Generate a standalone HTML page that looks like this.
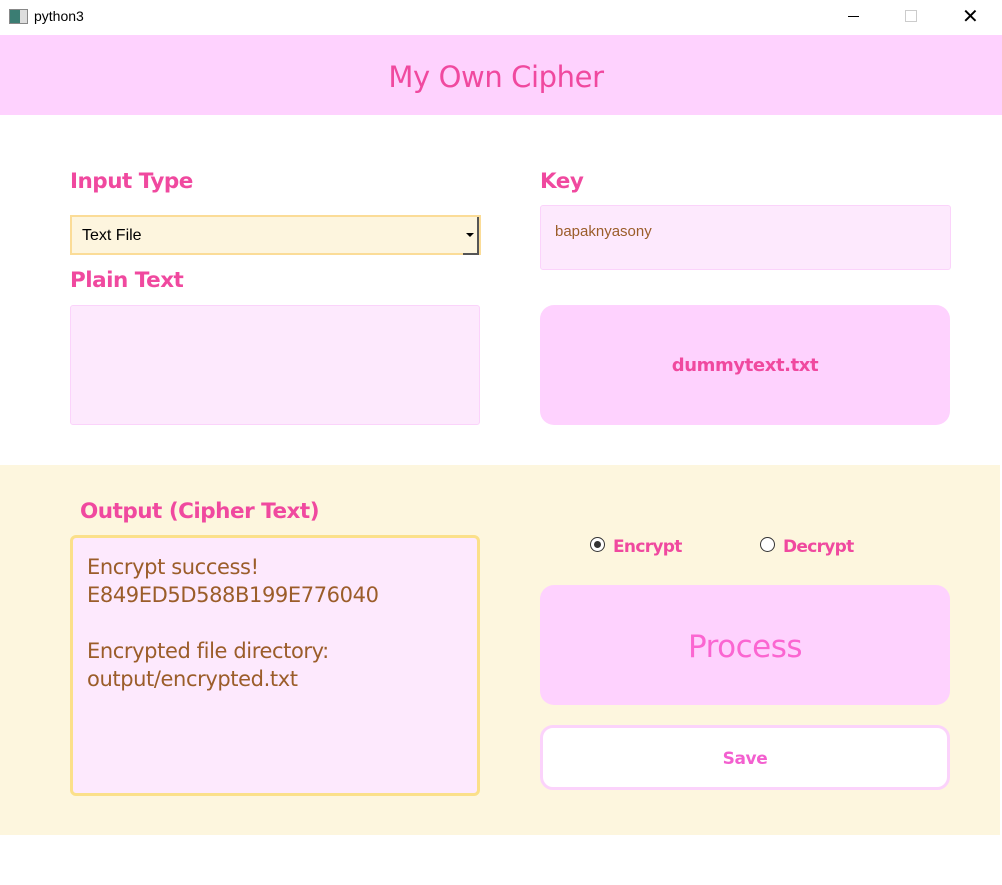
<!DOCTYPE html>
<html><head><meta charset="utf-8"><style>
body{margin:0;width:1002px;height:885px;background:#fff;position:relative;overflow:hidden;font-family:"DejaVu Sans","Liberation Sans",sans-serif}
.a{position:absolute}
.lbl{color:#f0499f;font-weight:bold;font-size:21.5px;letter-spacing:-0.5px}
</style></head><body>
<div class="a" style="left:0;top:0;width:1002px;height:35px;background:#fff"></div>
<div class="a" style="left:9px;top:9px;width:17px;height:13px;border:1px solid #888;background:linear-gradient(90deg,#3b7d73 60%,#ddd 60%)"></div>
<div class="a" style="left:34px;top:8px;font-size:14px;font-family:'Liberation Sans',sans-serif;color:#000">python3</div>
<div class="a" style="left:848px;top:16px;width:11px;height:1px;background:#000"></div>
<div class="a" style="left:905px;top:10px;width:10px;height:10px;border:1px solid #ccc"></div>
<div class="a" style="left:962px;top:4px;font-size:20px;color:#000;font-family:'Liberation Sans',sans-serif">✕</div>

<div class="a" style="left:0;top:35px;width:1002px;height:80px;background:#fed2fe"></div>
<div class="a" style="left:0;top:60px;width:992px;text-align:center;color:#f0499f;font-size:29px;letter-spacing:-0.4px">My Own Cipher</div>

<div class="a lbl" style="left:70px;top:169px">Input Type</div>
<div class="a" style="left:70px;top:215px;width:411px;height:40px;background:#fdf5de;border:2px solid #fbdc97;box-sizing:border-box"></div>
<div class="a" style="left:82px;top:227px;font-size:16px;font-family:'Liberation Sans',sans-serif;color:#000">Text File</div>
<div class="a" style="left:463px;top:217px;width:16px;height:38px;border-right:2px solid #555;border-bottom:2px solid #555;box-sizing:border-box"></div>
<div class="a" style="left:466px;top:233px;width:0;height:0;border-left:4px solid transparent;border-right:4px solid transparent;border-top:4px solid #000"></div>
<div class="a lbl" style="left:70px;top:268px">Plain Text</div>
<div class="a" style="left:70px;top:305px;width:410px;height:120px;background:#fde9fd;border:1px solid #fbd3fb;box-sizing:border-box;border-radius:3px"></div>

<div class="a lbl" style="left:540px;top:169px">Key</div>
<div class="a" style="left:540px;top:205px;width:411px;height:65px;background:#fde9fd;border:1px solid #fbd3fb;box-sizing:border-box;border-radius:3px"></div>
<div class="a" style="left:555px;top:223px;font-size:15px;color:#9b5d2a;font-family:'Liberation Sans',sans-serif">bapaknyasony</div>
<div class="a" style="left:540px;top:305px;width:410px;height:120px;background:#fed2fe;border-radius:14px"></div>
<div class="a" style="left:540px;top:355px;width:410px;text-align:center;color:#f0499f;font-weight:bold;font-size:18px;letter-spacing:-0.4px">dummytext.txt</div>

<div class="a" style="left:0;top:465px;width:1000px;height:370px;background:#fdf6de"></div>
<div class="a lbl" style="left:80px;top:499px">Output (Cipher Text)</div>
<div class="a" style="left:70px;top:535px;width:410px;height:261px;background:#fde9fd;border:3px solid #fbe08a;box-sizing:border-box;border-radius:6px"></div>
<div class="a" style="left:87px;top:553px;font-size:21px;line-height:28px;color:#9b5d2a;letter-spacing:-0.4px;font-family:'DejaVu Sans',sans-serif">Encrypt success!<br>E849ED5D588B199E776040<br><br>Encrypted file directory:<br>output/encrypted.txt</div>

<div class="a" style="left:590px;top:537px;width:15px;height:15px;border:1px solid #333;border-radius:50%;background:#fff;box-sizing:border-box"></div>
<div class="a" style="left:594px;top:541px;width:7px;height:7px;border-radius:50%;background:#333"></div>
<div class="a" style="left:613px;top:537px;color:#f0499f;font-weight:bold;font-size:17px;letter-spacing:-0.7px">Encrypt</div>
<div class="a" style="left:760px;top:537px;width:15px;height:15px;border:1px solid #333;border-radius:50%;background:#fff;box-sizing:border-box"></div>
<div class="a" style="left:783px;top:537px;color:#f0499f;font-weight:bold;font-size:17px;letter-spacing:-0.7px">Decrypt</div>

<div class="a" style="left:540px;top:585px;width:410px;height:120px;background:#fed2fe;border-radius:14px"></div>
<div class="a" style="left:540px;top:629px;width:410px;text-align:center;color:#fb66d1;font-size:31px;letter-spacing:-0.5px">Process</div>
<div class="a" style="left:540px;top:725px;width:410px;height:65px;background:#fff;border:3px solid #fbd3fb;box-sizing:border-box;border-radius:13px"></div>
<div class="a" style="left:540px;top:749px;width:410px;text-align:center;color:#f35fcf;font-weight:bold;font-size:17px;letter-spacing:-0.4px">Save</div>
</body></html>
